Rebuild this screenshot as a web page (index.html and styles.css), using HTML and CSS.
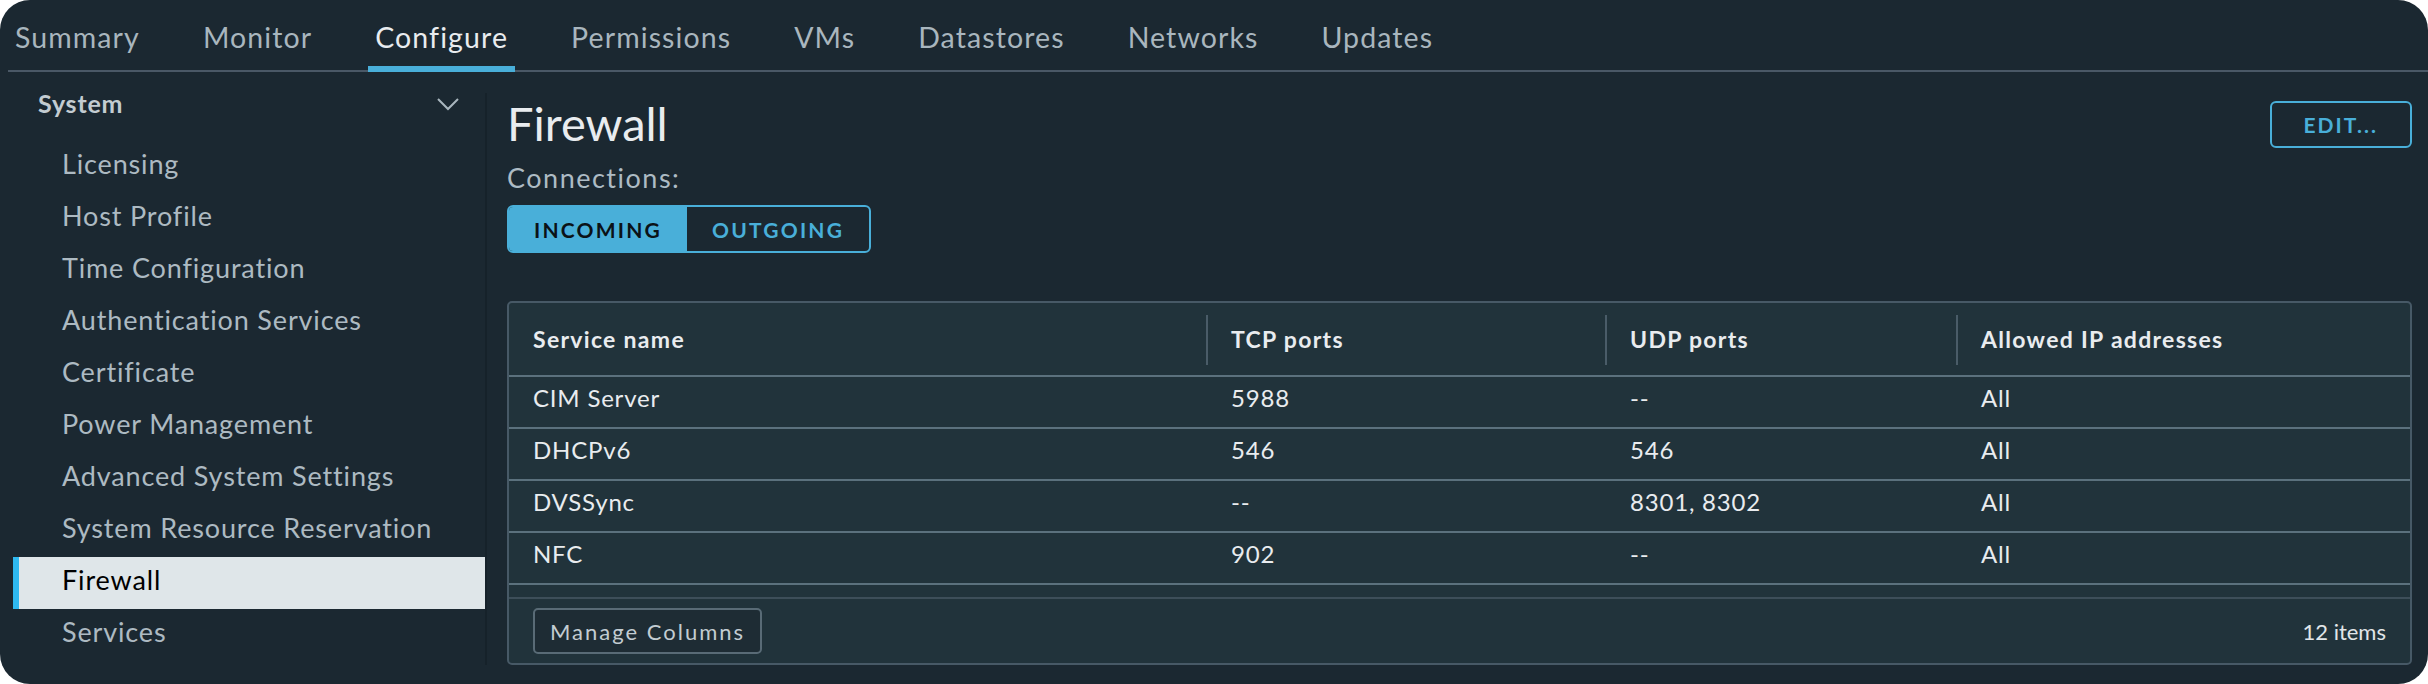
FILE: index.html
```html
<!DOCTYPE html>
<html lang="en">
<head>
<meta charset="utf-8">
<title>Firewall</title>
<link rel="stylesheet" href="styles.css">
</head>
<body>
<div class="frame">
  <nav class="tabs">
    <a class="tab">Summary</a>
    <a class="tab">Monitor</a>
    <a class="tab active">Configure</a>
    <a class="tab">Permissions</a>
    <a class="tab">VMs</a>
    <a class="tab">Datastores</a>
    <a class="tab">Networks</a>
    <a class="tab">Updates</a>
  </nav>
  <div class="body">
    <aside class="sidebar">
      <div class="group-head">
        <span class="group-title">System</span>
        <svg class="chevron" width="24" height="14" viewBox="0 0 24 14"><polyline points="2,2 12,12 22,2" fill="none" stroke="#a9b6be" stroke-width="2"/></svg>
      </div>
      <ul class="nav-list">
        <li class="nav-item">Licensing</li>
        <li class="nav-item">Host Profile</li>
        <li class="nav-item">Time Configuration</li>
        <li class="nav-item">Authentication Services</li>
        <li class="nav-item">Certificate</li>
        <li class="nav-item">Power Management</li>
        <li class="nav-item">Advanced System Settings</li>
        <li class="nav-item">System Resource Reservation</li>
        <li class="nav-item active">Firewall</li>
        <li class="nav-item">Services</li>
      </ul>
    </aside>
    <main class="content">
      <div class="title-row">
        <h1 class="title">Firewall</h1>
        <button class="btn-outline">EDIT...</button>
      </div>
      <div class="label">Connections:</div>
      <div class="seg">
        <button class="seg-btn active">INCOMING</button>
        <button class="seg-btn">OUTGOING</button>
      </div>
      <div class="grid">
        <div class="grid-row grid-head">
          <div class="cell">Service name</div>
          <div class="cell">TCP ports</div>
          <div class="cell">UDP ports</div>
          <div class="cell">Allowed IP addresses</div>
        </div>
        <div class="grid-row">
          <div class="cell">CIM Server</div>
          <div class="cell">5988</div>
          <div class="cell">--</div>
          <div class="cell">All</div>
        </div>
        <div class="grid-row">
          <div class="cell">DHCPv6</div>
          <div class="cell">546</div>
          <div class="cell">546</div>
          <div class="cell">All</div>
        </div>
        <div class="grid-row">
          <div class="cell">DVSSync</div>
          <div class="cell">--</div>
          <div class="cell">8301, 8302</div>
          <div class="cell">All</div>
        </div>
        <div class="grid-row">
          <div class="cell">NFC</div>
          <div class="cell">902</div>
          <div class="cell">--</div>
          <div class="cell">All</div>
        </div>
        <div class="grid-spacer"></div>
        <div class="grid-foot">
          <button class="btn-manage">Manage Columns</button>
          <span class="count">12 items</span>
        </div>
      </div>
    </main>
  </div>
</div>
</body>
</html>
```
FILE: styles.css
```css
* { box-sizing: border-box; }
html, body { margin: 0; padding: 0; background: #ffffff; }
body { font-family: Lato, "Liberation Sans", sans-serif; }

.frame {
  width: 2428px;
  height: 684px;
  background: #1b2831;
  border-radius: 30px;
  overflow: hidden;
  display: flex;
  flex-direction: column;
}

/* tabs */
.tabs {
  display: flex;
  gap: 49px;
  height: 72px;
  margin-left: 8px;
  border-bottom: 2px solid #4a5866;
  flex-shrink: 0;
}
.tab {
  display: block;
  height: 72px;
  padding: 19px 7px 0;
  font-size: 28.5px;
  line-height: 36px;
  color: #a9b6be;
  border-bottom: 6px solid transparent;
  letter-spacing: 1.1px;
}
.tab.active {
  color: #e9ecef;
  border-bottom-color: #49afd9;
}

.body {
  flex: 1;
  display: flex;
  padding: 21px 0 19px;
}

/* sidebar */
.sidebar {
  width: 487px;
  flex-shrink: 0;
  border-right: 2px solid #16222a;
}
.group-head {
  display: flex;
  justify-content: space-between;
  align-items: flex-start;
  height: 48px;
  padding: 0 25px 0 38px;
}
.group-title {
  font-size: 25px;
  font-weight: 700;
  line-height: 21px;
  color: #c3ccd1;
  letter-spacing: 0.8px;
}
.chevron { margin-top: 4px; }
.nav-list {
  list-style: none;
  margin: 0;
  padding: 0;
}
.nav-item {
  height: 52px;
  margin-left: 13px;
  padding-left: 49px;
  font-size: 27px;
  line-height: 45px;
  color: #adbac2;
  letter-spacing: 0.85px;
}
.nav-item.active {
  background: #dfe6e9;
  color: #000000;
  border-left: 6px solid #2fb9f0;
  padding-left: 43px;
}

/* content */
.content {
  flex: 1;
  padding: 0 16px 0 20px;
  display: flex;
  flex-direction: column;
}
.title-row {
  display: flex;
  justify-content: space-between;
  align-items: flex-start;
  margin-top: 2px;
}
.title {
  margin: 0;
  font-size: 47px;
  font-weight: 400;
  line-height: 56px;
  color: #e9ecef;
}
.btn-outline {
  margin-top: 6px;
  height: 47px;
  padding: 0 32px;
  background: transparent;
  border: 2px solid #49afd9;
  border-radius: 6px;
  color: #49afd9;
  font-family: inherit;
  font-size: 21px;
  font-weight: 700;
  letter-spacing: 2px;
}
.label {
  margin-top: 10px;
  font-size: 27px;
  line-height: 34px;
  color: #adbbc4;
  letter-spacing: 1.5px;
}
.seg {
  margin-top: 10px;
  align-self: flex-start;
  display: flex;
  height: 48px;
  border: 2px solid #49afd9;
  border-radius: 6px;
  overflow: hidden;
}
.seg-btn {
  padding: 0 25px;
  background: transparent;
  border: 0;
  color: #49afd9;
  font-family: inherit;
  font-size: 21px;
  font-weight: 700;
  letter-spacing: 2.2px;
}
.seg-btn.active {
  background: #49afd9;
  color: #0b1217;
}

/* datagrid */
.grid {
  margin-top: 48px;
  height: 364px;
  border: 2px solid #475966;
  border-radius: 5px;
  background: #21333b;
  display: flex;
  flex-direction: column;
}
.grid-row {
  display: grid;
  grid-template-columns: 697px 399px 351px 1fr;
  height: 52px;
  border-bottom: 2px solid #5b717d;
}
.grid-row .cell {
  display: flex;
  align-items: center;
  padding: 0 0 9px 24px;
  font-size: 24px;
  color: #e9ecef;
  letter-spacing: 0.8px;
}
.grid-row .cell + .cell { padding-left: 25px; }
.grid-head {
  height: 74px;
  padding: 12px 0 10px;
}
.grid-head .cell {
  padding-bottom: 3px;
  font-size: 23px;
  font-weight: 700;
  letter-spacing: 1.3px;
}
.grid-head .cell + .cell {
  border-left: 2px solid #4a5c68;
  padding-left: 23px;
}
.grid-spacer { height: 12px; }
.grid-foot {
  flex: 1;
  display: flex;
  justify-content: space-between;
  align-items: center;
  padding: 0 24px;
  border-top: 2px solid #3d4e59;
}
.btn-manage {
  height: 46px;
  padding: 0 15px;
  background: #1e2c34;
  border: 2px solid #596b76;
  border-radius: 5px;
  color: #c3ccd2;
  font-family: inherit;
  font-size: 22px;
  letter-spacing: 2px;
}
.count {
  font-size: 22px;
  color: #e1e6e9;
}
```
